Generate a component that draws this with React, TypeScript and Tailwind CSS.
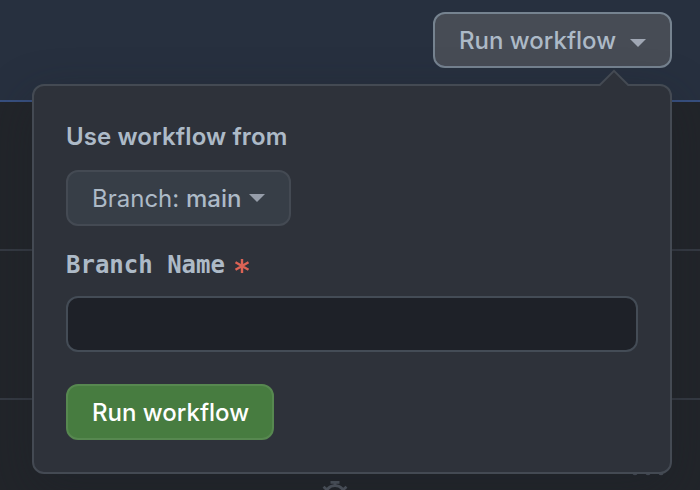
import React from "react";

function Caret() {
  return (
    <svg width="16" height="8" viewBox="0 0 16 8" className="block shrink-0" fill="currentColor">
      <path d="M0 0h16L8 8z" />
    </svg>
  );
}

function Backdrop() {
  return (
    <div className="flex h-[490px] flex-col bg-[#22252a]">
      <div className="flex h-[102px] shrink-0 items-start justify-end border-b-2 border-[#385080] bg-[#27303f] pr-7 pt-3">
        <button className="flex h-14 w-[239px] items-center justify-between rounded-[12px] border-2 border-[#768390] bg-[#474c55] px-6 text-[24px] font-medium leading-none text-[#adbac7]">
          <span className="whitespace-nowrap pt-0.5">Run workflow</span>
          <span className="pt-1.5 text-[#a0a7b4]">
            <Caret />
          </span>
        </button>
      </div>
      <div className="h-[149px] shrink-0 border-b-2 border-[#353a43]" />
      <div className="h-[149px] shrink-0 border-b-2 border-[#353a43]" />
      <div className="flex h-[90px] items-start justify-between overflow-hidden pl-[322px] pr-[36px]">
        <svg width="26" height="26" viewBox="0 0 26 26" fill="none" stroke="#535963" strokeWidth="2.8" className="mt-[80px] shrink-0">
          <path d="M8.5 2.4h9M13 2v4M1.5 6.8l3.5 3M24.5 6.8l-3.5 3" />
          <circle cx="13" cy="15.5" r="9.8" />
        </svg>
        <svg width="32" height="6" viewBox="0 0 32 6" fill="#4d535d" className="mt-[70px] shrink-0">
          <circle cx="3" cy="2.8" r="2.5" />
          <circle cx="16" cy="2.8" r="2.5" />
          <circle cx="29" cy="2.8" r="2.5" />
        </svg>
      </div>
    </div>
  );
}

export default function App() {
  return (
    <div className="relative h-[490px] w-[700px] overflow-hidden font-['Inter','Liberation_Sans',sans-serif] text-[#adbac7]">
      <Backdrop />
      <div className="absolute left-8 top-[84px] flex h-[390px] w-[640px] flex-col items-start rounded-[12px] border-2 border-[#444a53] bg-[#2e323a] px-8 pt-[33px] shadow-[0_16px_48px_rgba(28,33,40,0.4)]">
        <svg width="30" height="17" viewBox="0 0 30 17" className="absolute -top-[17px] left-[565px]">
          <path d="M0 17 V16 L15 1.5 L30 16 V17Z" fill="#2e323a" />
          <path d="M0 16 H.8 L15 1.8 L29.2 16 H30" fill="none" stroke="#444a53" strokeWidth="2" />
        </svg>
        <div className="h-9 whitespace-nowrap text-[24px] font-semibold leading-9 tracking-[0.1px]">Use workflow from</div>
        <button className="mt-[15px] flex h-14 w-[225px] items-center justify-between rounded-[12px] border-2 border-[#444a53] bg-[#373e47] px-6 text-[24px] leading-none">
          <span className="whitespace-nowrap pt-0.5">
            Branch: <span className="font-medium">main</span>
          </span>
          <span className="text-[#969da9]">
            <Caret />
          </span>
        </button>
        <label className="mt-[21px] flex h-9 items-center whitespace-pre font-['DejaVu_Sans_Mono',monospace] text-[24px] font-bold leading-9">
          Branch Name
          <svg width="16" height="16" viewBox="0 0 16 16" className="ml-[9px] mt-0.5" stroke="#dc6355" strokeWidth="2.4">
            <path d="M8 1v14M1.5 4.2l13 7.6M14.5 4.2l-13 7.6" />
          </svg>
        </label>
        <input
          aria-label="Branch Name"
          className="mt-[13px] h-14 w-[572px] rounded-[12px] border-2 border-[#444c56] bg-[#1e2128] px-6"
        />
        <button className="mt-8 flex h-14 w-[208px] items-center rounded-[12px] border-2 border-[#578850] bg-[#477c40] px-6 text-[24px] font-medium leading-none text-white">
          <span className="whitespace-nowrap pt-0.5">Run workflow</span>
        </button>
      </div>
    </div>
  );
}
